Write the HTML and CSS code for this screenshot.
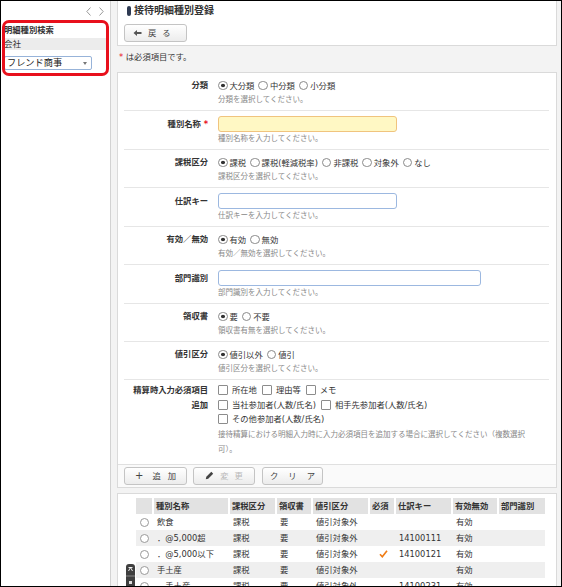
FILE: index.html
```html
<!DOCTYPE html>
<html lang="ja">
<head>
<meta charset="utf-8">
<title>接待明細種別登録</title>
<link rel="stylesheet" href="styles.css">
</head>
<body>
<div class="frame">
  <aside class="side">
    <div class="side-nav">
      <svg width="5" height="9" viewBox="0 0 5 9"><path d="M4.5 0.5 L0.8 4.5 L4.5 8.5" fill="none" stroke="#999" stroke-width="1"/></svg>
      <svg width="5" height="9" viewBox="0 0 5 9"><path d="M0.5 0.5 L4.2 4.5 L0.5 8.5" fill="none" stroke="#999" stroke-width="1"/></svg>
    </div>
    <div class="side-title">明細種別検索</div>
    <div class="side-field">会社</div>
    <div class="side-select"><span>フレンド商事</span><span class="caret"></span></div>
    <div class="highlight"></div>
  </aside>

  <main class="main">
    <section class="panel head">
      <h1 class="title"><span class="title-mark"></span>接待明細種別登録</h1>
      <button class="btn back" type="button">
        <svg width="9" height="8" viewBox="0 0 9 8"><path d="M0.5 4 L4 1 V3 H8.5 V5 H4 V7 Z" fill="#555"/></svg>
        <span>戻</span><span>る</span>
      </button>
    </section>

    <p class="note"><span class="req">*</span> は必須項目です。</p>

    <section class="panel form">
      <div class="rows">
        <div class="row">
          <div class="label">分類</div>
          <div class="value">
            <div class="line"><span class="radio on">大分類</span><span class="radio">中分類</span><span class="radio">小分類</span></div>
            <div class="hint">分類を選択してください。</div>
          </div>
        </div>
        <div class="row tall">
          <div class="label">種別名称 <span class="req">*</span></div>
          <div class="value">
            <div class="field field-req"></div>
            <div class="hint">種別名称を入力してください。</div>
          </div>
        </div>
        <div class="row">
          <div class="label">課税区分</div>
          <div class="value">
            <div class="line"><span class="radio on">課税</span><span class="radio">課税(軽減税率)</span><span class="radio">非課税</span><span class="radio">対象外</span><span class="radio">なし</span></div>
            <div class="hint">課税区分を選択してください。</div>
          </div>
        </div>
        <div class="row tall">
          <div class="label">仕訳キー</div>
          <div class="value">
            <div class="field"></div>
            <div class="hint">仕訳キーを入力してください。</div>
          </div>
        </div>
        <div class="row">
          <div class="label">有効／無効</div>
          <div class="value">
            <div class="line"><span class="radio on">有効</span><span class="radio">無効</span></div>
            <div class="hint">有効／無効を選択してください。</div>
          </div>
        </div>
        <div class="row tall">
          <div class="label">部門識別</div>
          <div class="value">
            <div class="field field-wide"></div>
            <div class="hint">部門識別を入力してください。</div>
          </div>
        </div>
        <div class="row">
          <div class="label">領収書</div>
          <div class="value">
            <div class="line"><span class="radio on">要</span><span class="radio">不要</span></div>
            <div class="hint">領収書有無を選択してください。</div>
          </div>
        </div>
        <div class="row">
          <div class="label">値引区分</div>
          <div class="value">
            <div class="line"><span class="radio on">値引以外</span><span class="radio">値引</span></div>
            <div class="hint">値引区分を選択してください。</div>
          </div>
        </div>
        <div class="row multi">
          <div class="label">精算時入力必須項目<br>追加</div>
          <div class="value">
            <div class="line"><span class="check">所在地</span><span class="check">理由等</span><span class="check">メモ</span></div>
            <div class="line"><span class="check">当社参加者(人数/氏名)</span><span class="check">相手先参加者(人数/氏名)</span></div>
            <div class="line"><span class="check">その他参加者(人数/氏名)</span></div>
            <div class="hint wrap">接待精算における明細入力時に入力必須項目を追加する場合に選択してください（複数選択可）。</div>
          </div>
        </div>
      </div>
      <div class="actions">
        <button class="btn act add" type="button"><span class="plus">+</span><span>追</span><span>加</span></button>
        <button class="btn act edit" type="button">
          <svg width="9" height="9" viewBox="0 0 9 9"><path d="M6.3 0.8 L8.2 2.7 L3.2 7.7 L0.8 8.2 L1.3 5.8 Z" fill="#444"/></svg>
          <span>変</span><span>更</span>
        </button>
        <button class="btn act clear" type="button"><span>ク</span><span>リ</span><span>ア</span></button>
      </div>
    </section>

    <section class="panel list">
      <table class="grid">
        <colgroup>
          <col class="c-sel"><col class="c-name"><col class="c-tax"><col class="c-rcpt"><col class="c-disc"><col class="c-req"><col class="c-key"><col class="c-valid"><col class="c-dept">
        </colgroup>
        <thead>
          <tr><th></th><th>種別名称</th><th>課税区分</th><th>領収書</th><th>値引区分</th><th>必須</th><th>仕訳キー</th><th>有効無効</th><th>部門識別</th></tr>
        </thead>
        <tbody>
          <tr><td><span class="rb"></span></td><td>飲食</td><td>課税</td><td>要</td><td>値引対象外</td><td></td><td></td><td>有効</td><td></td></tr>
          <tr class="alt"><td><span class="rb"></span></td><td>．@5,000超</td><td>課税</td><td>要</td><td>値引対象外</td><td></td><td>14100111</td><td>有効</td><td></td></tr>
          <tr><td><span class="rb"></span></td><td>．@5,000以下</td><td>課税</td><td>要</td><td>値引対象外</td><td class="ok"><svg width="9" height="8" viewBox="0 0 9 8"><path d="M1 4.3 L3.3 6.8 L8 0.8" fill="none" stroke="#f07c14" stroke-width="1.6"/></svg></td><td>14100121</td><td>有効</td><td></td></tr>
          <tr class="alt"><td><span class="rb"></span></td><td>手土産</td><td>課税</td><td>要</td><td>値引対象外</td><td></td><td></td><td>有効</td><td></td></tr>
          <tr><td><span class="rb"></span></td><td>．手土産</td><td>課税</td><td>要</td><td>値引対象外</td><td></td><td>14100231</td><td>有効</td><td></td></tr>
        </tbody>
      </table>
    </section>
  </main>

  <div class="float-tab">
    <svg width="9" height="26" viewBox="0 0 9 26">
      <path d="M0 3 Q0 0 3 0 H6 Q9 0 9 3 V26 H0 Z" fill="#3f3f3f"/>
      <path d="M2.5 3.5 H6.5 M4.5 3.5 L2.5 7 M4.5 3.5 L6.5 7" stroke="#fff" stroke-width="0.9" fill="none"/>
      <path d="M0 12 H9" stroke="#888" stroke-width="1"/>
      <rect x="3" y="17" width="3" height="3" fill="#ddd"/>
    </svg>
  </div>
</div>
</body>
</html>
```

FILE: styles.css
```css
* { box-sizing: border-box; }

html, body {
  margin: 0;
  padding: 0;
  background: #fff;
}

body {
  font-family: "DejaVu Sans", "Noto Sans CJK JP", sans-serif;
  font-size: 8.3px;
  line-height: 14px;
  color: #333;
}

.frame {
  position: relative;
  width: 562px;
  height: 587px;
  border: 1px solid #000;
  overflow: hidden;
  display: flex;
  background: #fff;
}

/* ---------- sidebar ---------- */
.side {
  position: relative;
  width: 110px;
  flex: 0 0 110px;
  border-right: 1px solid #d2d2d2;
  background: #fff;
}

.side-nav {
  height: 21px;
  display: flex;
  justify-content: flex-end;
  align-items: center;
  gap: 8px;
  padding: 0 6px 0 0;
}

.side-title {
  font-weight: bold;
  padding-left: 3px;
  line-height: 16px;
}

.side-field {
  margin: 0 3px 0 2px;
  height: 12px;
  line-height: 12px;
  background: #ececec;
  padding-left: 1px;
  font-size: 8.5px;
}

.side-select {
  margin: 6px 0 0 3px;
  width: 88px;
  height: 14px;
  border: 1px solid #97b3d9;
  border-radius: 2px;
  display: flex;
  align-items: center;
  justify-content: space-between;
  padding: 0 4px 0 2px;
  font-size: 9.2px;
  line-height: 12px;
  color: #222;
}

.caret {
  width: 0;
  height: 0;
  border-left: 2px solid transparent;
  border-right: 2px solid transparent;
  border-top: 3px solid #777;
}

.highlight {
  position: absolute;
  left: 1px;
  top: 19px;
  width: 107px;
  height: 56px;
  border: 3px solid #e8101c;
  border-radius: 7px;
}

/* ---------- main ---------- */
.main {
  flex: 1;
  background: #f3f3f3;
  padding: 0 4px 0 6px;
}

.panel {
  background: #fff;
  border: 1px solid #dadada;
}

.head {
  border-top: 0;
  height: 45px;
  padding: 3px 6px 0;
}

.title {
  margin: 0 0 6px 3px;
  display: flex;
  align-items: center;
  font-size: 10px;
  line-height: 14px;
  font-weight: bold;
  color: #333;
}

.title-mark {
  width: 4px;
  height: 10px;
  border-radius: 2px;
  background: #2e3a52;
  margin-right: 3px;
}

.btn {
  font-family: inherit;
  font-size: 8.3px;
  line-height: 14px;
  color: #444;
  height: 18px;
  border: 1px solid #c4c4c4;
  border-radius: 3px;
  background: linear-gradient(#ffffff, #ececec);
  display: inline-flex;
  align-items: center;
  padding: 0;
  margin: 0;
}

.back {
  width: 63px;
  padding-left: 8px;
  gap: 6px;
}

.note {
  margin: 0;
  padding: 4px 0 0 2px;
  height: 26px;
  line-height: 14px;
}

.req {
  color: #e8101c;
}

/* ---------- form ---------- */
.rows {
  padding: 0 7px 0 6px;
}

.row {
  display: grid;
  grid-template-columns: 84px 1fr;
  column-gap: 10px;
  padding: 5px 0 3px;
  border-bottom: 1px solid #e6e6e6;
}

.row:last-child {
  border-bottom: 0;
}

.label {
  text-align: right;
  font-weight: bold;
  line-height: 15px;
  white-space: nowrap;
}

.row.tall .label {
  line-height: 16px;
}

.line {
  display: flex;
  align-items: center;
  height: 15px;
  white-space: nowrap;
}

.hint {
  font-size: 7.5px;
  line-height: 14px;
  color: #888;
}

.hint.wrap {
  padding-right: 8px;
  line-height: 15px;
}

.radio {
  display: inline-flex;
  align-items: center;
  margin-right: 4px;
}

.radio::before {
  content: "";
  width: 7.5px;
  height: 7.5px;
  border: 1px solid #8a8a8a;
  border-radius: 50%;
  margin-right: 2px;
  background: #fff;
}

.radio.on::before {
  background: radial-gradient(circle, #333 0 1.6px, #fff 2.1px);
}

.check {
  display: inline-flex;
  align-items: center;
  margin-right: 5px;
}

.check::before {
  content: "";
  width: 8px;
  height: 8px;
  border: 1px solid #8c8c8c;
  border-radius: 1px;
  margin-right: 4px;
  background: #fff;
}

.field {
  width: 179px;
  height: 16px;
  border: 1px solid #9cb8e0;
  border-radius: 3px;
  background: #fff;
}

.field-req {
  background: #fff8c4;
  border-color: #f0c47e;
}

.field-wide {
  width: 263px;
}

.row.multi {
  padding: 3px 0 7px;
}

.row.multi .line {
  height: 14.5px;
}

.actions {
  border-top: 1px solid #e0e0e0;
  background: #fafafa;
  padding: 2px 6px 2px;
  display: flex;
  gap: 6px;
}

.act {
  justify-content: center;
}

.add {
  width: 63px;
  gap: 7px;
}

.plus {
  font-size: 10px;
  margin-right: 2px;
}

.edit {
  width: 62px;
  gap: 6px;
  color: #b8b8b8;
}

.clear {
  width: 61px;
  gap: 10px;
  margin-left: 1px;
}

/* ---------- list ---------- */
.list {
  margin-top: 5px;
  padding: 4px 10px 0 18px;
  height: 200px;
}

.grid {
  width: 409px;
  table-layout: fixed;
  border-collapse: collapse;
}

.c-sel { width: 17px; }
.c-name { width: 76px; }
.c-tax { width: 47px; }
.c-rcpt { width: 36px; }
.c-disc { width: 57px; }
.c-req { width: 26px; }
.c-key { width: 57px; }
.c-valid { width: 46px; }
.c-dept { width: 47px; }

.grid th {
  height: 16px;
  background: #e2e2e2;
  border-left: 2px solid #fff;
  text-align: left;
  font-weight: bold;
  padding: 0 2px;
  white-space: nowrap;
  overflow: hidden;
}

.grid th:first-child {
  border-left: 0;
}

.grid td {
  height: 16px;
  padding: 0 0 0 4px;
  white-space: nowrap;
  overflow: hidden;
  vertical-align: middle;
}

.grid td:first-child {
  padding: 0;
  text-align: center;
}

.grid tr.alt td {
  background: #efefef;
}

.rb {
  display: inline-block;
  width: 9px;
  height: 9px;
  border: 1px solid #999;
  border-radius: 50%;
  background: #fff;
  vertical-align: middle;
}

.grid td.ok {
  padding-left: 10px;
}

.ok svg {
  display: block;
}

.float-tab {
  position: absolute;
  left: 125px;
  top: 563px;
  width: 9px;
  height: 26px;
}

.float-tab svg {
  display: block;
}
```
